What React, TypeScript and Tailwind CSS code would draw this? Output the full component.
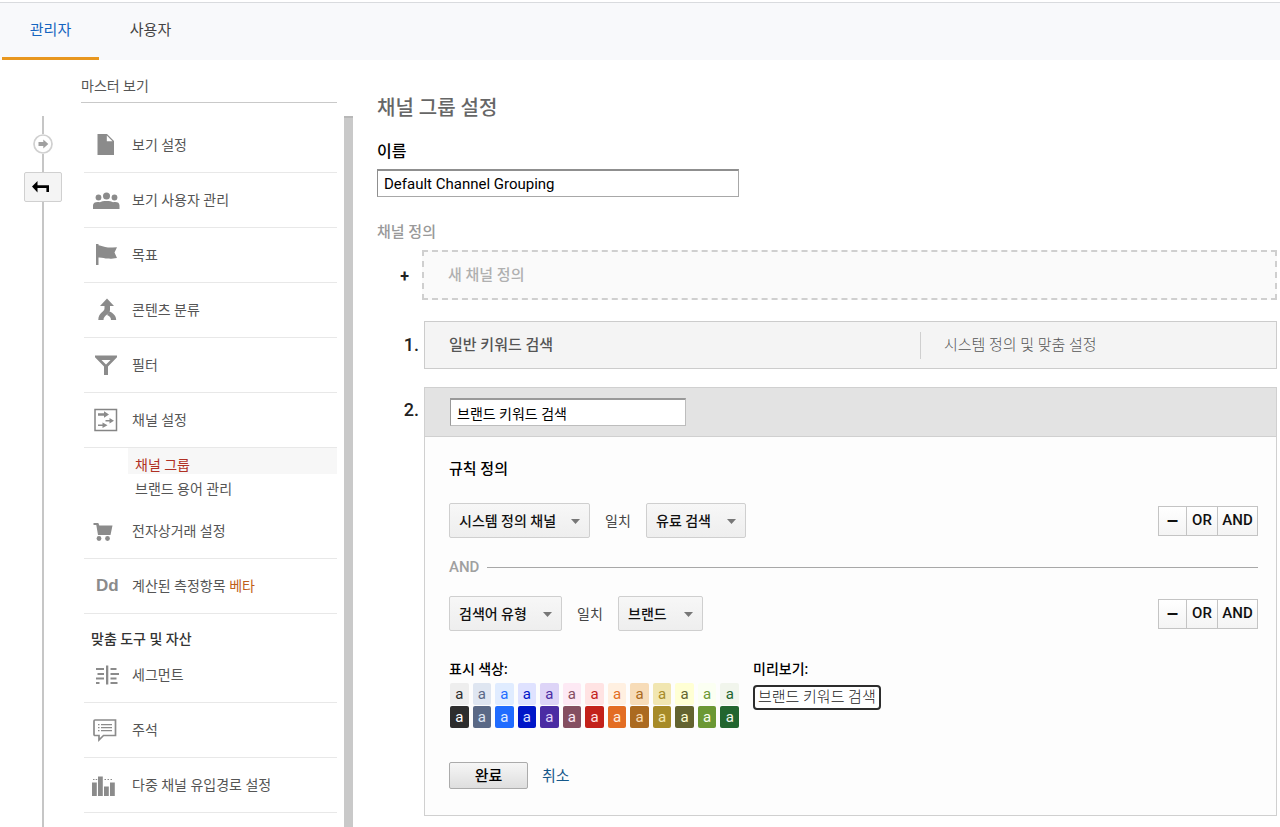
import type { ReactNode } from 'react';

const Svg = ({ children }: { children: ReactNode }) => (
  <svg className="w-7 h-7 shrink-0" viewBox="0 0 28 28" fill="#8b8b8b" aria-hidden="true">
    {children}
  </svg>
);

const FileIcon = () => (
  <Svg>
    <path d="M5.500 3H15l7 7v14H5.500z" />
    <path d="M14.800 4.500v5.700h5.700z" fill="#fff" />
  </Svg>
);

const PeopleIcon = () => (
  <Svg>
    <circle cx="6.500" cy="11.500" r="2.900" />
    <circle cx="14.500" cy="10" r="3.500" />
    <circle cx="22.500" cy="11.500" r="2.900" />
    <path d="M1 23v-3.500C1 16.500 4 15.500 8 16.200c2-1.700 11-1.700 13 0 4-.7 6.500.3 6.500 3.300V23z" />
  </Svg>
);

const FlagIcon = () => (
  <Svg>
    <path d="M4 3h2.500v21H4z" />
    <path d="M5 4c4 0 7 2.500 11 2.500 3 0 6-.3 9-.3l-2.500 5.300 2.500 5.500c-4 .6-6 .8-9 .6-4-.3-6-1.600-11-1.100z" />
  </Svg>
);

const MergeIcon = () => (
  <Svg>
    <path d="M15 2.500l7 7.500h-4v4c0 4.500-6.500 5-6.500 10H6.300c0-7.500 6.200-8 6.200-11.500V10H8z" />
    <path d="M17.500 15.500c3.500 1.500 6.700 4 6.700 8.500H19c0-3-2-4-4-5z" />
  </Svg>
);

const FilterIcon = () => (
  <Svg>
    <path fillRule="evenodd" d="M3 4.500h22v1.800l-9 9.200v8.500h-4v-8.500L3 6.300zM9.500 9l4.500 4.500 4.500-4.500z" />
  </Svg>
);

const ChannelIcon = () => (
  <Svg>
    <rect x="3" y="3.500" width="21.500" height="21" fill="#fff" stroke="#858585" strokeWidth="1.500" />
    <path d="M6 7.200h6V5.200l5 3.300-5 3.300v-2H6zM13.500 14h4v-2l4.500 2.800-4.500 2.800v-2h-4zM6 18.500h4.500v-2l5 2.800-5 2.800v-2H6z" />
  </Svg>
);

const CartIcon = () => (
  <Svg>
    <path d="M1.500 6h4.800l1 2.500h13.200l-2 9.500H6L4.300 8H1.500z" />
    <circle cx="7" cy="21.500" r="2.400" />
    <circle cx="15.500" cy="21.500" r="2.400" />
  </Svg>
);

const DdIcon = () => (
  <span className="w-7 shrink-0 pl-1 font-['Liberation_Sans'] text-[17px] leading-5 font-bold text-[#8b8b8b]">Dd</span>
);

const SegmentIcon = () => (
  <Svg>
    <path d="M14 4.500h2.300v19H14zM4 7h8v2H4zM5.500 12H12v2H5.500zM4 16.500h8v2H4zM4 21h3.500v2H4zM18.500 7h6v2h-6zM18.500 12H27v2h-8.500zM18.500 16.500h6v2h-6zM18.500 21h7v2h-7z" />
  </Svg>
);

const NoteIcon = () => (
  <Svg>
    <path d="M3 4h20.500v15.500H11.500L7 24v-4.500H3c-.6 0-1-.4-1-1V5c0-.6.4-1 1-1z" fill="#fff" stroke="#8b8b8b" strokeWidth="1.700" />
    <path d="M6 8h1.500v1.300H6zM9 8h11v1.300H9zM6 11h1.500v1.300H6zM9 11h11v1.300H9zM6 14h1.500v1.300H6zM9 14h11v1.300H9z" />
  </Svg>
);

const BarsIcon = () => (
  <Svg>
    <path d="M0 11.500h4.800V25H0zM6 5.500h4.800V25H6zM12 15.500h4.800V25H12zM18 11.500h4.800V25H18z" />
    <path d="M1 8h1.500v1H1zM3.700 8h1.500v1H3.700zM12.500 8H14v1h-1.500zM15.500 8H17v1h-1.500zM18.500 8H20v1h-1.500z" />
  </Svg>
);

const menu = [
  { icon: <FileIcon />, label: '보기 설정' },
  { icon: <PeopleIcon />, label: '보기 사용자 관리' },
  { icon: <FlagIcon />, label: '목표' },
  { icon: <MergeIcon />, label: '콘텐츠 분류' },
  { icon: <FilterIcon />, label: '필터' },
  { icon: <ChannelIcon />, label: '채널 설정' },
];

const assets = [
  { icon: <SegmentIcon />, label: '세그먼트' },
  { icon: <NoteIcon />, label: '주석' },
  { icon: <BarsIcon />, label: '다중 채널 유입경로 설정' },
];

const swatches = [
  { light: '#eeeeee', dark: '#2d2d2d', pale: '#ffffff' },
  { light: '#dfe6f1', dark: '#5a6986', pale: '#dee5f2' },
  { light: '#e0ecff', dark: '#206cff', pale: '#e0ecff' },
  { light: '#dfe2ff', dark: '#0016c8', pale: '#dfe2ff' },
  { light: '#ddd4f7', dark: '#4b2ca3', pale: '#e0d5f9' },
  { light: '#fde9f4', dark: '#854f61', pale: '#fde9f4' },
  { light: '#ffe3e3', dark: '#c3211a', pale: '#ffe3e3' },
  { light: '#fff0e1', dark: '#e36d23', pale: '#fff0e1' },
  { light: '#f7dcb8', dark: '#ab6a20', pale: '#fadcb3' },
  { light: '#f1e6b1', dark: '#a78b28', pale: '#f3e7b3' },
  { light: '#ffffd4', dark: '#636330', pale: '#ffffd4' },
  { light: '#fbfff2', dark: '#6b9834', pale: '#f9ffef' },
  { light: '#f1f5ec', dark: '#22652f', pale: '#f1f5ec' },
];

function MenuItem({ icon, label, beta }: { icon: ReactNode; label: string; beta?: boolean }) {
  return (
    <a href="#" className="flex h-[55px] items-center gap-3 border-b border-[#e8e8e8] pl-2">
      {icon}
      <span className="whitespace-nowrap">
        {label} {beta && <span className="text-[#bf5f1a]">베타</span>}
      </span>
    </a>
  );
}

function Dropdown({ label, value, className }: { label: string; value: string; className: string }) {
  return (
    <div className={`relative ${className}`}>
      <select
        aria-label={label}
        className="h-[35px] w-full appearance-none rounded-xs border border-[#cfcfcf] bg-linear-to-b from-[#f7f7f7] to-[#eeeeee] pl-[9px] text-sm font-medium text-[#111]"
      >
        <option>{value}</option>
      </select>
      <svg className="pointer-events-none absolute top-4 right-2.5 h-[5px] w-[9px]" viewBox="0 0 9 5" fill="#777" aria-hidden="true">
        <path d="M0 0h9L4.500 5z" />
      </svg>
    </div>
  );
}

function RuleActions() {
  return (
    <div className="ml-auto flex h-[30px] divide-x-1 divide-[#c4c4c4] border border-[#c4c4c4] bg-linear-to-b from-white to-[#f4f4f4] text-[15px] font-medium text-[#111]">
      <button type="button" className="w-7 text-xl leading-5">–</button>
      <button type="button" className="w-[31px]">OR</button>
      <button type="button" className="w-[39px]">AND</button>
    </div>
  );
}

function Sidebar() {
  return (
    <aside className="flex w-[353px] shrink-0 flex-col">
      <h2 className="mr-4 ml-[81px] border-b border-[#c9c9c9] pt-[14px] pb-1 text-sm leading-6 text-[#555]">마스터 보기</h2>
      <div className="mt-[13px] flex flex-1">
        {/* Timeline */}
        <div className="mr-[22px] ml-6 flex w-[38px] flex-col items-center">
          <div className="h-[18px] w-[2px] bg-[#c6c6c6]" />
          <svg className="h-5 w-5" viewBox="0 0 20 20" aria-hidden="true">
            <circle cx="10" cy="10" r="9" fill="#fff" stroke="#d0d0d0" strokeWidth="1.700" />
            <path d="M5.500 8h4.800V5.500l5 4.500-5 4.500V12H5.500z" fill="#a0a0a0" />
          </svg>
          <div className="h-[18px] w-[2px] bg-[#c6c6c6]" />
          <button type="button" aria-label="뒤로" className="flex h-[30px] w-[38px] items-center rounded-xs border border-[#d0d0d0] bg-[#f4f4f4] pl-[7px]">
            <svg className="h-3 w-[17px]" viewBox="0 0 17 12" aria-hidden="true">
              <path d="M0 5.500L5.500 0v4.300H17V11h-2.600V7H5.500v4.500z" fill="#000" />
            </svg>
          </button>
          <div className="w-[2px] flex-1 bg-[#c6c6c6]" />
        </div>

        <nav className="flex-1 pt-[2px] text-sm text-[#555]">
          {menu.map((item) => (
            <MenuItem key={item.label} icon={item.icon} label={item.label} />
          ))}
          <div className="ml-11 leading-[18px]">
            <a href="#" className="block bg-[#f7f7f7] pt-2 pl-[7px] text-[#b03024]">채널 그룹</a>
            <a href="#" className="block pt-[6px] pb-[6px] pl-[7px]">브랜드 용어 관리</a>
          </div>
          <MenuItem icon={<CartIcon />} label="전자상거래 설정" />
          <MenuItem icon={<DdIcon />} label="계산된 측정항목" beta />
          <h3 className="pt-4 pl-[7px] leading-[18px] font-medium text-[#333]">맞춤 도구 및 자산</h3>
          {assets.map((item) => (
            <MenuItem key={item.label} icon={item.icon} label={item.label} />
          ))}
        </nav>
        <div className="ml-[7px] w-[9px] border-t-2 border-[#b8b8b8] bg-[#c9c9c9]" />
      </div>
    </aside>
  );
}

function ChannelEditor() {
  return (
    <div className="flex-1 border border-[#d0d0d0] bg-[#fdfdfd]">
      <div className="flex h-[49px] items-center border-b border-[#d0d0d0] bg-[#e3e3e3] pl-[25px]">
        <input
          aria-label="채널 이름"
          defaultValue="브랜드 키워드 검색"
          className="h-7 w-[236px] border border-t-2 border-[#bdbdbd] border-t-[#999] border-l-[#999] bg-white px-[6px] text-sm text-black"
        />
      </div>
      <div className="pr-[18px] pb-[26px] pl-6">
        <h4 className="pt-[22px] text-[15px] leading-5 font-medium text-black">규칙 정의</h4>

        <div className="mt-6 flex items-center">
          <Dropdown label="측정기준" value="시스템 정의 채널" className="w-[141px]" />
          <span className="w-14 text-center text-sm text-[#444]">일치</span>
          <Dropdown label="값" value="유료 검색" className="w-[100px]" />
          <RuleActions />
        </div>

        <div className="mt-[19px] flex items-center gap-2 text-[15px] leading-5 font-medium text-[#a0a0a0]">
          AND
          <div className="h-px flex-1 bg-[#a8a8a8]" />
        </div>

        <div className="mt-[19px] flex items-center">
          <Dropdown label="측정기준" value="검색어 유형" className="w-[113px]" />
          <span className="w-14 text-center text-sm text-[#444]">일치</span>
          <Dropdown label="값" value="브랜드" className="w-[85px]" />
          <RuleActions />
        </div>

        <div className="mt-7 flex gap-[14px]">
          <div>
            <h4 className="text-sm leading-5 font-medium text-black">표시 색상:</h4>
            <div className="mt-1 ml-px grid w-[289px] grid-cols-13 gap-x-1 gap-y-px text-[15px] leading-[22px]">
              {swatches.map((s) => (
                <button key={s.dark} type="button" className="h-[22px] rounded-xs" style={{ background: s.light, color: s.dark }}>a</button>
              ))}
              {swatches.map((s) => (
                <button key={s.dark} type="button" className="h-[22px] rounded-xs" style={{ background: s.dark, color: s.pale }}>a</button>
              ))}
            </div>
          </div>
          <div>
            <h4 className="text-sm leading-5 font-medium text-black">미리보기:</h4>
            <div className="mt-[6px] rounded border-2 border-[#2d2d2d] bg-white px-[3px] text-[15px] leading-[21px] font-light text-[#222]">브랜드 키워드 검색</div>
          </div>
        </div>

        <div className="mt-[34px] flex items-center gap-[14px]">
          <button type="button" className="h-[27px] w-[79px] rounded-xs border border-[#ababab] bg-linear-to-b from-[#f6f6f6] to-[#dedede] text-[15px] leading-5 font-medium text-black">완료</button>
          <a href="#" className="text-[15px] leading-5 text-[#15588a]">취소</a>
        </div>
      </div>
    </div>
  );
}

export default function App() {
  return (
    <div className="flex min-h-screen flex-col bg-white font-['Roboto','Noto_Sans_CJK_KR',sans-serif] text-[#444]">
      <header className="mt-[2px] flex h-[58px] border-t border-[#d9dbde] bg-[#f8f9fb] pl-[2px] text-[15px]">
        <a href="#" className="flex w-[97px] items-center justify-center border-b-3 border-[#e8971f] text-[#1565c0]">관리자</a>
        <a href="#" className="flex w-[103px] items-center justify-center border-b-3 border-transparent">사용자</a>
      </header>

      <div className="flex flex-1">
        <Sidebar />
        <main className="min-w-0 flex-1 pt-10 pr-[3px] pb-[10px] pl-6">
          <h1 className="text-xl leading-4 font-medium text-[#666]">채널 그룹 설정</h1>
          <label htmlFor="name" className="mt-[26px] block text-base leading-5 font-medium text-black">이름</label>
          <input
            id="name"
            defaultValue="Default Channel Grouping"
            className="mt-[7px] block h-7 w-[362px] border border-t-2 border-[#a8a8a8] border-t-[#8f8f8f] border-l-[#8f8f8f] px-[6px] text-[15px] text-black"
          />
          <h3 className="mt-[25px] text-[15px] leading-5 font-medium text-[#999]">채널 정의</h3>

          <div className="mt-2 flex items-center">
            <span className="w-[45px] pt-1 pr-[13px] text-right text-base font-bold text-[#222]">+</span>
            <button type="button" className="h-[50px] flex-1 border-2 border-dashed border-[#cfcfcf] bg-[#fafafa] pl-6 text-left text-[15px] font-medium text-[#b0b0b0]">새 채널 정의</button>
          </div>

          <div className="mt-[21px] flex items-center">
            <span className="w-[47px] pr-[5px] text-right text-lg font-medium text-[#222]">1.</span>
            <div className="flex h-12 flex-1 items-center border border-[#cccccc] bg-[#f4f4f4] pl-6 text-[15px] text-[#555]">
              <span className="flex-1 font-medium">일반 키워드 검색</span>
              <span className="w-[356px] border-l border-[#cfcfcf] pl-[23px] leading-[27px] font-light">시스템 정의 및 맞춤 설정</span>
            </div>
          </div>

          <div className="mt-[18px] flex items-start">
            <span className="w-[47px] pt-[9px] pr-[5px] text-right text-lg font-medium text-[#222]">2.</span>
            <ChannelEditor />
          </div>
        </main>
      </div>
    </div>
  );
}
